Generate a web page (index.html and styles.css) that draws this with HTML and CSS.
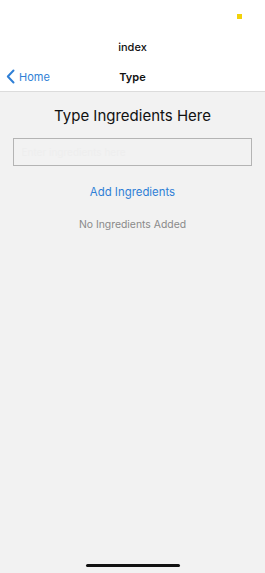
FILE: index.html
```html
<!DOCTYPE html>
<html lang="en">
<head>
    <meta charset="UTF-8">
    <meta name="viewport" content="width=device-width, initial-scale=1.0">
    <title>Type</title>
    <link rel="stylesheet" href="styles.css">
</head>
<body>

<div class="screen">
    <header class="top">
        <div class="status-bar">
            <span class="dot"></span>
        </div>
        <div class="app-title">index</div>
        <nav class="nav-bar">
            <a class="back" href="#">
                <svg width="9" height="15" viewBox="0 0 9 15">
                    <path d="M7.5 1.5 L1.8 7.5 L7.5 13.5" fill="none" stroke="#2f7fd6" stroke-width="2" stroke-linecap="round" stroke-linejoin="round"/>
                </svg>
                <span>Home</span>
            </a>
            <div class="nav-title">Type</div>
        </nav>
    </header>

    <main class="content">
        <h1>Type Ingredients Here</h1>
        <input type="text" class="ingredient-input" placeholder="Enter ingredients here">
        <button class="add-btn">Add Ingredients</button>
        <p class="empty">No Ingredients Added</p>
    </main>

    <div class="home-indicator"></div>
</div>

</body>
</html>
```

FILE: styles.css
```css
body {
    margin: 0;
    padding: 0;
    font-family: Inter, "Noto Sans", Arial, sans-serif;
    background-color: #f2f2f2;
}
.screen {
    height: 573px;
    display: flex;
    flex-direction: column;
}
.top {
    background-color: white;
    border-bottom: 1px solid #dcdcdc;
}
.status-bar {
    height: 30px;
    position: relative;
}
.status-bar .dot {
    position: absolute;
    left: 237px;
    top: 14px;
    width: 5px;
    height: 5px;
    background-color: #f2d20a;
}
.app-title {
    height: 32px;
    line-height: 34px;
    text-align: center;
    font-size: 11px;
    font-weight: 500;
    color: #111;
}
.nav-bar {
    height: 29px;
    display: flex;
    align-items: center;
    position: relative;
}
.back {
    display: flex;
    align-items: center;
    gap: 4px;
    padding-left: 6px;
    color: #2f7fd6;
    text-decoration: none;
    font-size: 11px;
    position: relative;
    z-index: 1;
}
.nav-title {
    position: absolute;
    left: 0;
    right: 0;
    text-align: center;
    font-size: 11px;
    font-weight: 600;
    color: #111;
}
.content {
    flex: 1;
    display: flex;
    flex-direction: column;
    align-items: center;
}
.content h1 {
    margin: 13px 0 0;
    font-size: 15px;
    font-weight: 400;
    color: #111;
    line-height: 22px;
}
.ingredient-input {
    box-sizing: border-box;
    width: 239px;
    height: 28px;
    margin-top: 11px;
    margin-left: -1px;
    border: 1px solid #b4b4b4;
    background-color: #f2f2f2;
    padding: 0 8px;
    font-family: inherit;
    font-size: 10px;
}
.ingredient-input::placeholder {
    color: #eeeeee;
}
.add-btn {
    margin-top: 18px;
    background: none;
    border: none;
    padding: 0;
    font-family: inherit;
    font-size: 11.4px;
    color: #2f7fd6;
    line-height: 16px;
    cursor: pointer;
}
.empty {
    margin: 17px 0 0;
    font-size: 10.4px;
    color: #8a8a8a;
    line-height: 16px;
}
.home-indicator {
    width: 94px;
    height: 3px;
    border-radius: 2px;
    background-color: #111;
    margin: 0 auto 6px;
}
```
